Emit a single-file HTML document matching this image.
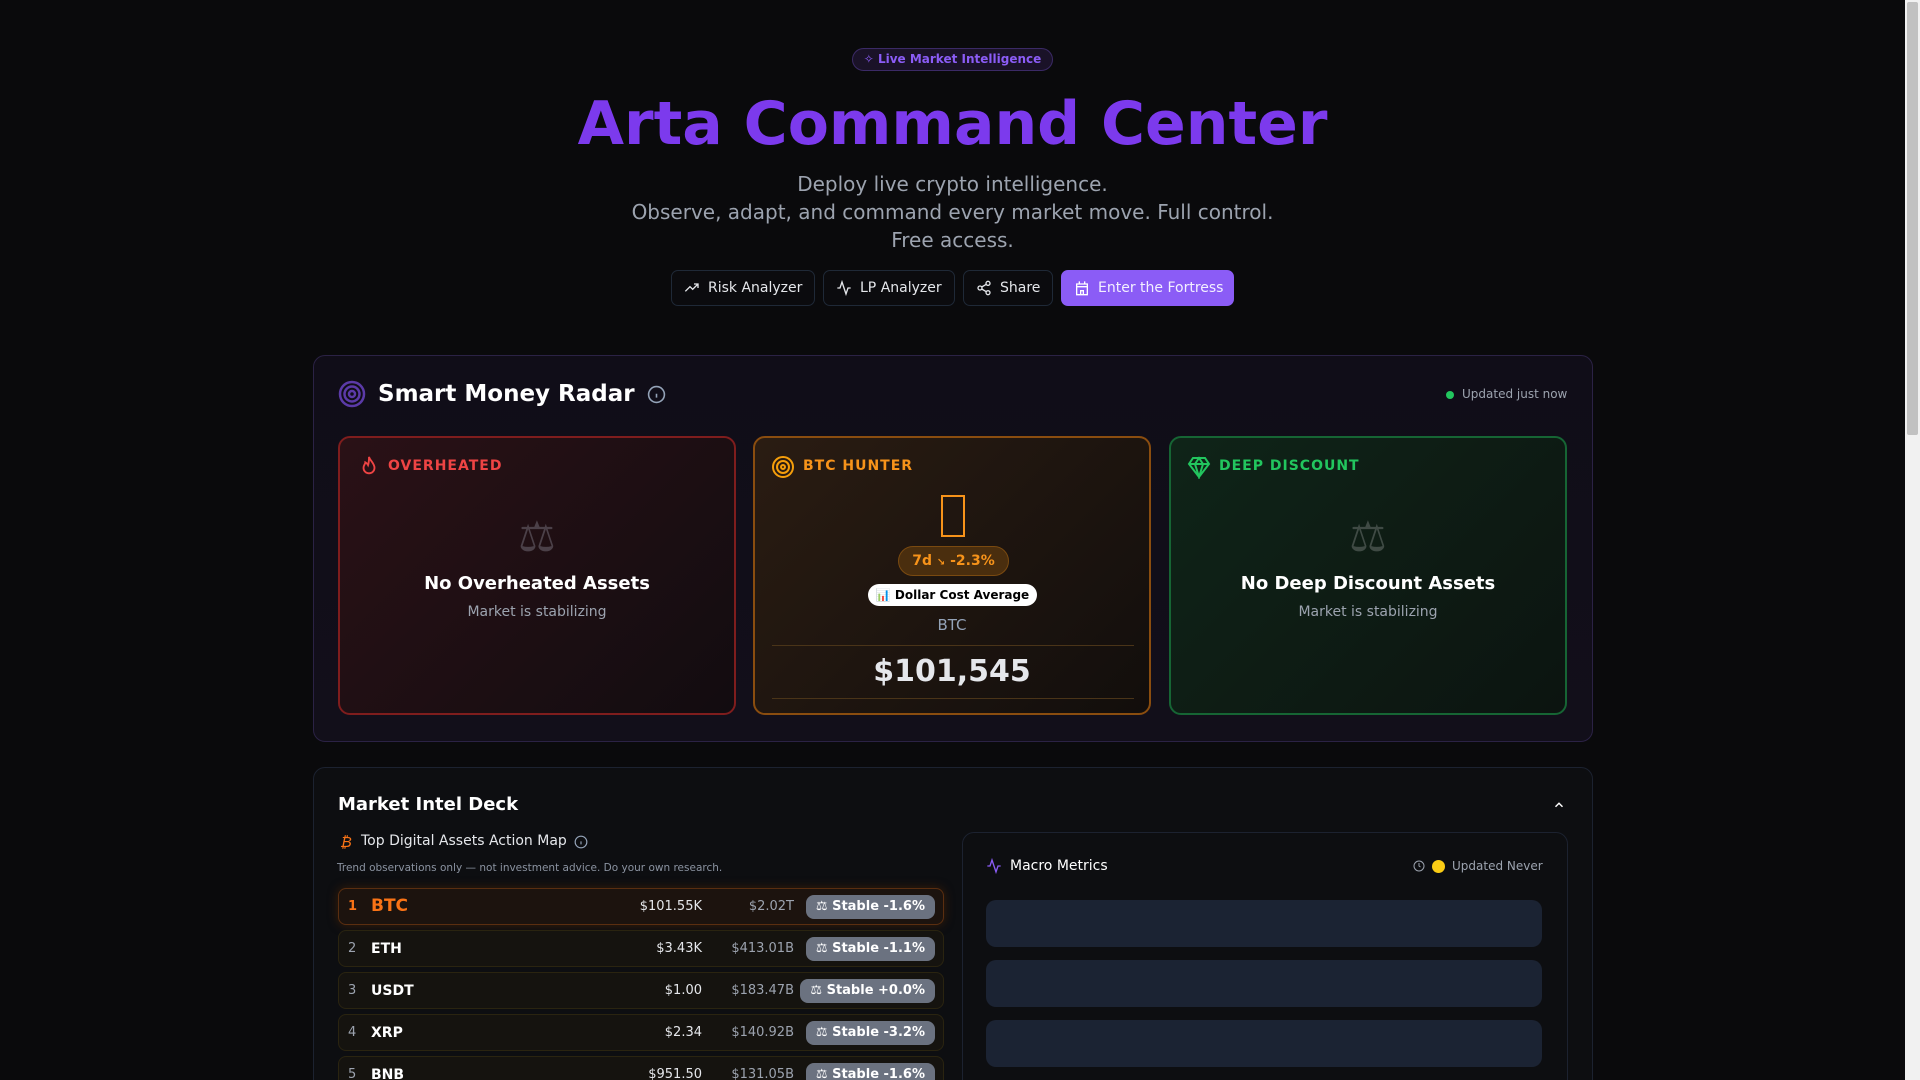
<!DOCTYPE html>
<html><head><meta charset="utf-8"><style>
*{box-sizing:border-box;margin:0;padding:0}
html,body{width:1920px;height:1080px;overflow:hidden;background:#0a0a0c;font-family:"DejaVu Sans","Liberation Sans",sans-serif;color:#e5e7eb}
#w{position:relative;width:1920px;height:1080px;overflow:hidden}
.a{position:absolute}
.c{text-align:center}
.btn{position:absolute;top:270px;height:36px;border:1px solid #1f2937;border-radius:7px;background:#0b0b0e;color:#e5e7eb;font-size:14px;display:flex;align-items:center;padding-left:12px;gap:8px}
.card{position:absolute;top:436px;width:398px;height:279px;border-radius:12px;border:2px solid}
.lbl{position:absolute;left:48px;top:20px;font-size:14px;font-weight:bold;letter-spacing:1px}
.row{position:absolute;left:338px;width:606px;height:37px;border-radius:8px;border:1px solid #2a2410;background:#15130f;font-size:13px}
.row span{position:absolute;top:10px}
.badge{position:absolute;top:6px;height:24px;border-radius:8px;background:#6b7280;color:#fff;font-weight:bold;font-size:13px;line-height:24px;padding:0 10px;right:8px}
.sk{position:absolute;left:986px;width:556px;height:47px;border-radius:10px;background:#1b2333}
</style></head><body><div id="w">
<div class="a" style="left:1905px;top:0;width:15px;height:1080px;background:#f1f1f1"></div>
<div class="a" style="left:1907px;top:2px;width:11px;height:433px;background:#c1c1c1;border-radius:2px"></div>

<div class="a c" style="left:852px;top:48px;width:201px;height:23px;border:1px solid #3b2a66;border-radius:12px;background:#1a1228;color:#8b5cf6;font-size:12px;font-weight:bold;line-height:21px">✧ Live Market Intelligence</div>
<div class="a c" style="left:0;width:1905px;top:84px;font-size:60px;font-weight:bold;color:#7c3aed;line-height:80px">Arta Command Center</div>
<div class="a c" style="left:0;width:1905px;top:170px;font-size:20px;line-height:28px;color:#9ca3af">Deploy live crypto intelligence.<br>Observe, adapt, and command every market move. Full control.<br>Free access.</div>

<div class="btn" style="left:671px;width:144px"><svg width="16" height="16" viewBox="0 0 24 24" fill="none" stroke="#e5e7eb" stroke-width="2"><path d="M2 17l7-7 4 4 8-8M15 6h6v6"/></svg>Risk Analyzer</div>
<div class="btn" style="left:823px;width:132px"><svg width="16" height="16" viewBox="0 0 24 24" fill="none" stroke="#e5e7eb" stroke-width="2"><path d="M2 12h4l3-9 6 18 3-9h4"/></svg>LP Analyzer</div>
<div class="btn" style="left:963px;width:90px"><svg width="16" height="16" viewBox="0 0 24 24" fill="none" stroke="#e5e7eb" stroke-width="2"><circle cx="18" cy="5" r="3"/><circle cx="6" cy="12" r="3"/><circle cx="18" cy="19" r="3"/><path d="M8.6 13.5l6.8 4M15.4 6.5l-6.8 4"/></svg>Share</div>
<div class="btn" style="left:1061px;width:173px;background:#8b5cf6;border-color:#8b5cf6;color:#f3f0ff"><svg width="16" height="16" viewBox="0 0 24 24" fill="none" stroke="#fff" stroke-width="2"><path d="M4 22V6h16v16zM4 10h16M8 2v4M16 2v4M10 22v-6h4v6"/></svg>Enter the Fortress</div>

<div class="a" style="left:313px;top:355px;width:1280px;height:387px;border:1px solid #2b2245;border-radius:12px;background:linear-gradient(180deg,#100d18,#120f1a)"></div>
<svg class="a" style="left:338px;top:380px" width="28" height="28" viewBox="0 0 28 28" fill="none" stroke="#5b3aa8" stroke-width="2.5"><circle cx="14" cy="14" r="12"/><circle cx="14" cy="14" r="7.5"/><circle cx="14" cy="14" r="3"/></svg>
<div class="a" style="left:378px;top:381px;font-size:23px;font-weight:bold;color:#fff">Smart Money Radar</div>
<svg class="a" style="left:647px;top:385px" width="19" height="19" viewBox="0 0 24 24" fill="none" stroke="#94a3b8" stroke-width="2"><circle cx="12" cy="12" r="10"/><path d="M12 16v-5M12 8h.01"/></svg>
<div class="a" style="left:1446px;top:391px;width:8px;height:8px;border-radius:50%;background:#22c55e"></div>
<div class="a" style="left:1462px;top:387px;font-size:12px;color:#9ca3af">Updated just now</div>

<div class="card" style="left:338px;border-color:#7f1d1d;background:linear-gradient(135deg,#2a1116,#120c10)">
<svg class="a" style="left:18px;top:17px" width="22" height="22" viewBox="0 0 24 24" fill="none" stroke="#ef4444" stroke-width="2"><path d="M12 2c1 4 6 7 6 12a6 6 0 0 1-12 0c0-3 2-4 2-6 2 1 3 3 3 3 1-3 1-6 1-9z"/></svg>
<div class="lbl" style="color:#ef4444">OVERHEATED</div>
<div class="a c" style="left:0;width:394px;top:74px;font-size:42px;color:#4b4048">⚖</div>
<div class="a c" style="left:0;width:394px;top:135px;font-size:18px;font-weight:bold;color:#fff">No Overheated Assets</div>
<div class="a c" style="left:0;width:394px;top:166px;font-size:14px;color:#9ca3af">Market is stabilizing</div>
</div>

<div class="card" style="left:753px;border-color:#8a4d0f;background:linear-gradient(135deg,#2a1c12,#120e0c)">
<svg class="a" style="left:16px;top:17px" width="24" height="24" viewBox="0 0 24 24" fill="none" stroke="#f59e0b" stroke-width="2"><circle cx="12" cy="12" r="10"/><circle cx="12" cy="12" r="6"/><circle cx="12" cy="12" r="2"/></svg>
<div class="lbl" style="color:#f7931a">BTC HUNTER</div>
<div class="a" style="left:186px;top:57px;width:24px;height:42px;border:2px solid #f7931a"></div>
<div class="a c" style="left:143px;top:108px;width:111px;height:30px;border:1px solid #7a4a10;border-radius:15px;background:#4a2e0e;color:#f7931a;font-size:14px;font-weight:bold;line-height:28px">7d <span style="font-size:10px">↘</span> -2.3%</div>
<div class="a c" style="left:113px;top:146px;width:169px;height:22px;border-radius:11px;background:#fff;color:#000;font-size:12px;font-weight:bold;line-height:22px">📊 Dollar Cost Average</div>
<div class="a c" style="left:0;width:394px;top:178px;font-size:15px;color:#94a3b8">BTC</div>
<div class="a" style="left:17px;top:207px;width:362px;height:1px;background:#4a3418"></div>
<div class="a c" style="left:0;width:394px;top:216px;font-size:30px;font-weight:bold;color:#e5e7eb">$101,545</div>
<div class="a" style="left:17px;top:260px;width:362px;height:1px;background:#4a3418"></div>
</div>

<div class="card" style="left:1169px;border-color:#166534;background:linear-gradient(135deg,#0f2418,#0c1410)">
<svg class="a" style="left:16px;top:17px" width="24" height="24" viewBox="0 0 24 24" fill="none" stroke="#22c55e" stroke-width="2"><path d="M6 3h12l4 6-10 13L2 9zM2 9h20M12 22 8 9l4-6 4 6z"/></svg>
<div class="lbl" style="color:#22c55e">DEEP DISCOUNT</div>
<div class="a c" style="left:0;width:394px;top:74px;font-size:42px;color:#3f4a44">⚖</div>
<div class="a c" style="left:0;width:394px;top:135px;font-size:18px;font-weight:bold;color:#fff">No Deep Discount Assets</div>
<div class="a c" style="left:0;width:394px;top:166px;font-size:14px;color:#9ca3af">Market is stabilizing</div>
</div>

<div class="a" style="left:313px;top:767px;width:1280px;height:340px;border:1px solid #1c2230;border-radius:12px;background:#0d0e11"></div>
<div class="a" style="left:338px;top:794px;font-size:18px;font-weight:bold;color:#fff">Market Intel Deck</div>
<svg class="a" style="left:1552px;top:798px" width="14" height="14" viewBox="0 0 24 24" fill="none" stroke="#fff" stroke-width="2.5"><path d="M6 15l6-6 6 6"/></svg>

<div class="a" style="left:340px;top:833px;font-size:15px;color:#f97316;font-style:italic">₿</div>
<div class="a" style="left:361px;top:833px;font-size:14px;color:#e5e7eb">Top Digital Assets Action Map</div>
<svg class="a" style="left:574px;top:835px" width="14" height="14" viewBox="0 0 24 24" fill="none" stroke="#94a3b8" stroke-width="2"><circle cx="12" cy="12" r="10"/><path d="M12 16v-5M12 8h.01"/></svg>
<div class="a" style="left:337px;top:862px;font-size:10.5px;color:#8b93a1">Trend observations only — not investment advice. Do your own research.</div>

<div class="row" style="top:888px;border-color:#5a2e10;background:#1c130e;box-shadow:0 0 10px #3a1e08"><span style="left:9px;color:#f97316;font-weight:bold">1</span><span style="left:32px;top:7px;color:#f97316;font-weight:bold;font-size:17px">BTC</span><span style="right:241px;color:#e5e7eb">$101.55K</span><span style="right:149px;color:#9ca3af">$2.02T</span><div class="badge">⚖ Stable -1.6%</div></div>
<div class="row" style="top:930px"><span style="left:9px;color:#9ca3af">2</span><span style="left:32px;color:#fff;font-weight:bold;font-size:14px">ETH</span><span style="right:241px">$3.43K</span><span style="right:149px;color:#9ca3af">$413.01B</span><div class="badge">⚖ Stable -1.1%</div></div>
<div class="row" style="top:972px"><span style="left:9px;color:#9ca3af">3</span><span style="left:32px;color:#fff;font-weight:bold;font-size:14px">USDT</span><span style="right:241px">$1.00</span><span style="right:149px;color:#9ca3af">$183.47B</span><div class="badge">⚖ Stable +0.0%</div></div>
<div class="row" style="top:1014px"><span style="left:9px;color:#9ca3af">4</span><span style="left:32px;color:#fff;font-weight:bold;font-size:14px">XRP</span><span style="right:241px">$2.34</span><span style="right:149px;color:#9ca3af">$140.92B</span><div class="badge">⚖ Stable -3.2%</div></div>
<div class="row" style="top:1056px"><span style="left:9px;color:#9ca3af">5</span><span style="left:32px;color:#fff;font-weight:bold;font-size:14px">BNB</span><span style="right:241px">$951.50</span><span style="right:149px;color:#9ca3af">$131.05B</span><div class="badge">⚖ Stable -1.6%</div></div>

<div class="a" style="left:962px;top:832px;width:606px;height:300px;border:1px solid #1c2230;border-radius:12px;background:#0d0e11"></div>
<svg class="a" style="left:986px;top:858px" width="16" height="16" viewBox="0 0 24 24" fill="none" stroke="#8b5cf6" stroke-width="2"><path d="M2 12h4l3-9 6 18 3-9h4"/></svg>
<div class="a" style="left:1010px;top:858px;font-size:14px;color:#fff">Macro Metrics</div>
<svg class="a" style="left:1413px;top:860px" width="12" height="12" viewBox="0 0 24 24" fill="none" stroke="#9ca3af" stroke-width="2"><circle cx="12" cy="12" r="10"/><path d="M12 6v6l3 2"/></svg>
<div class="a" style="left:1432px;top:860px;width:13px;height:13px;border-radius:50%;background:#facc15"></div>
<div class="a" style="left:1452px;top:859px;font-size:12px;color:#9ca3af">Updated Never</div>
<div class="sk" style="top:900px"></div>
<div class="sk" style="top:960px"></div>
<div class="sk" style="top:1020px"></div>
</div></body></html>
